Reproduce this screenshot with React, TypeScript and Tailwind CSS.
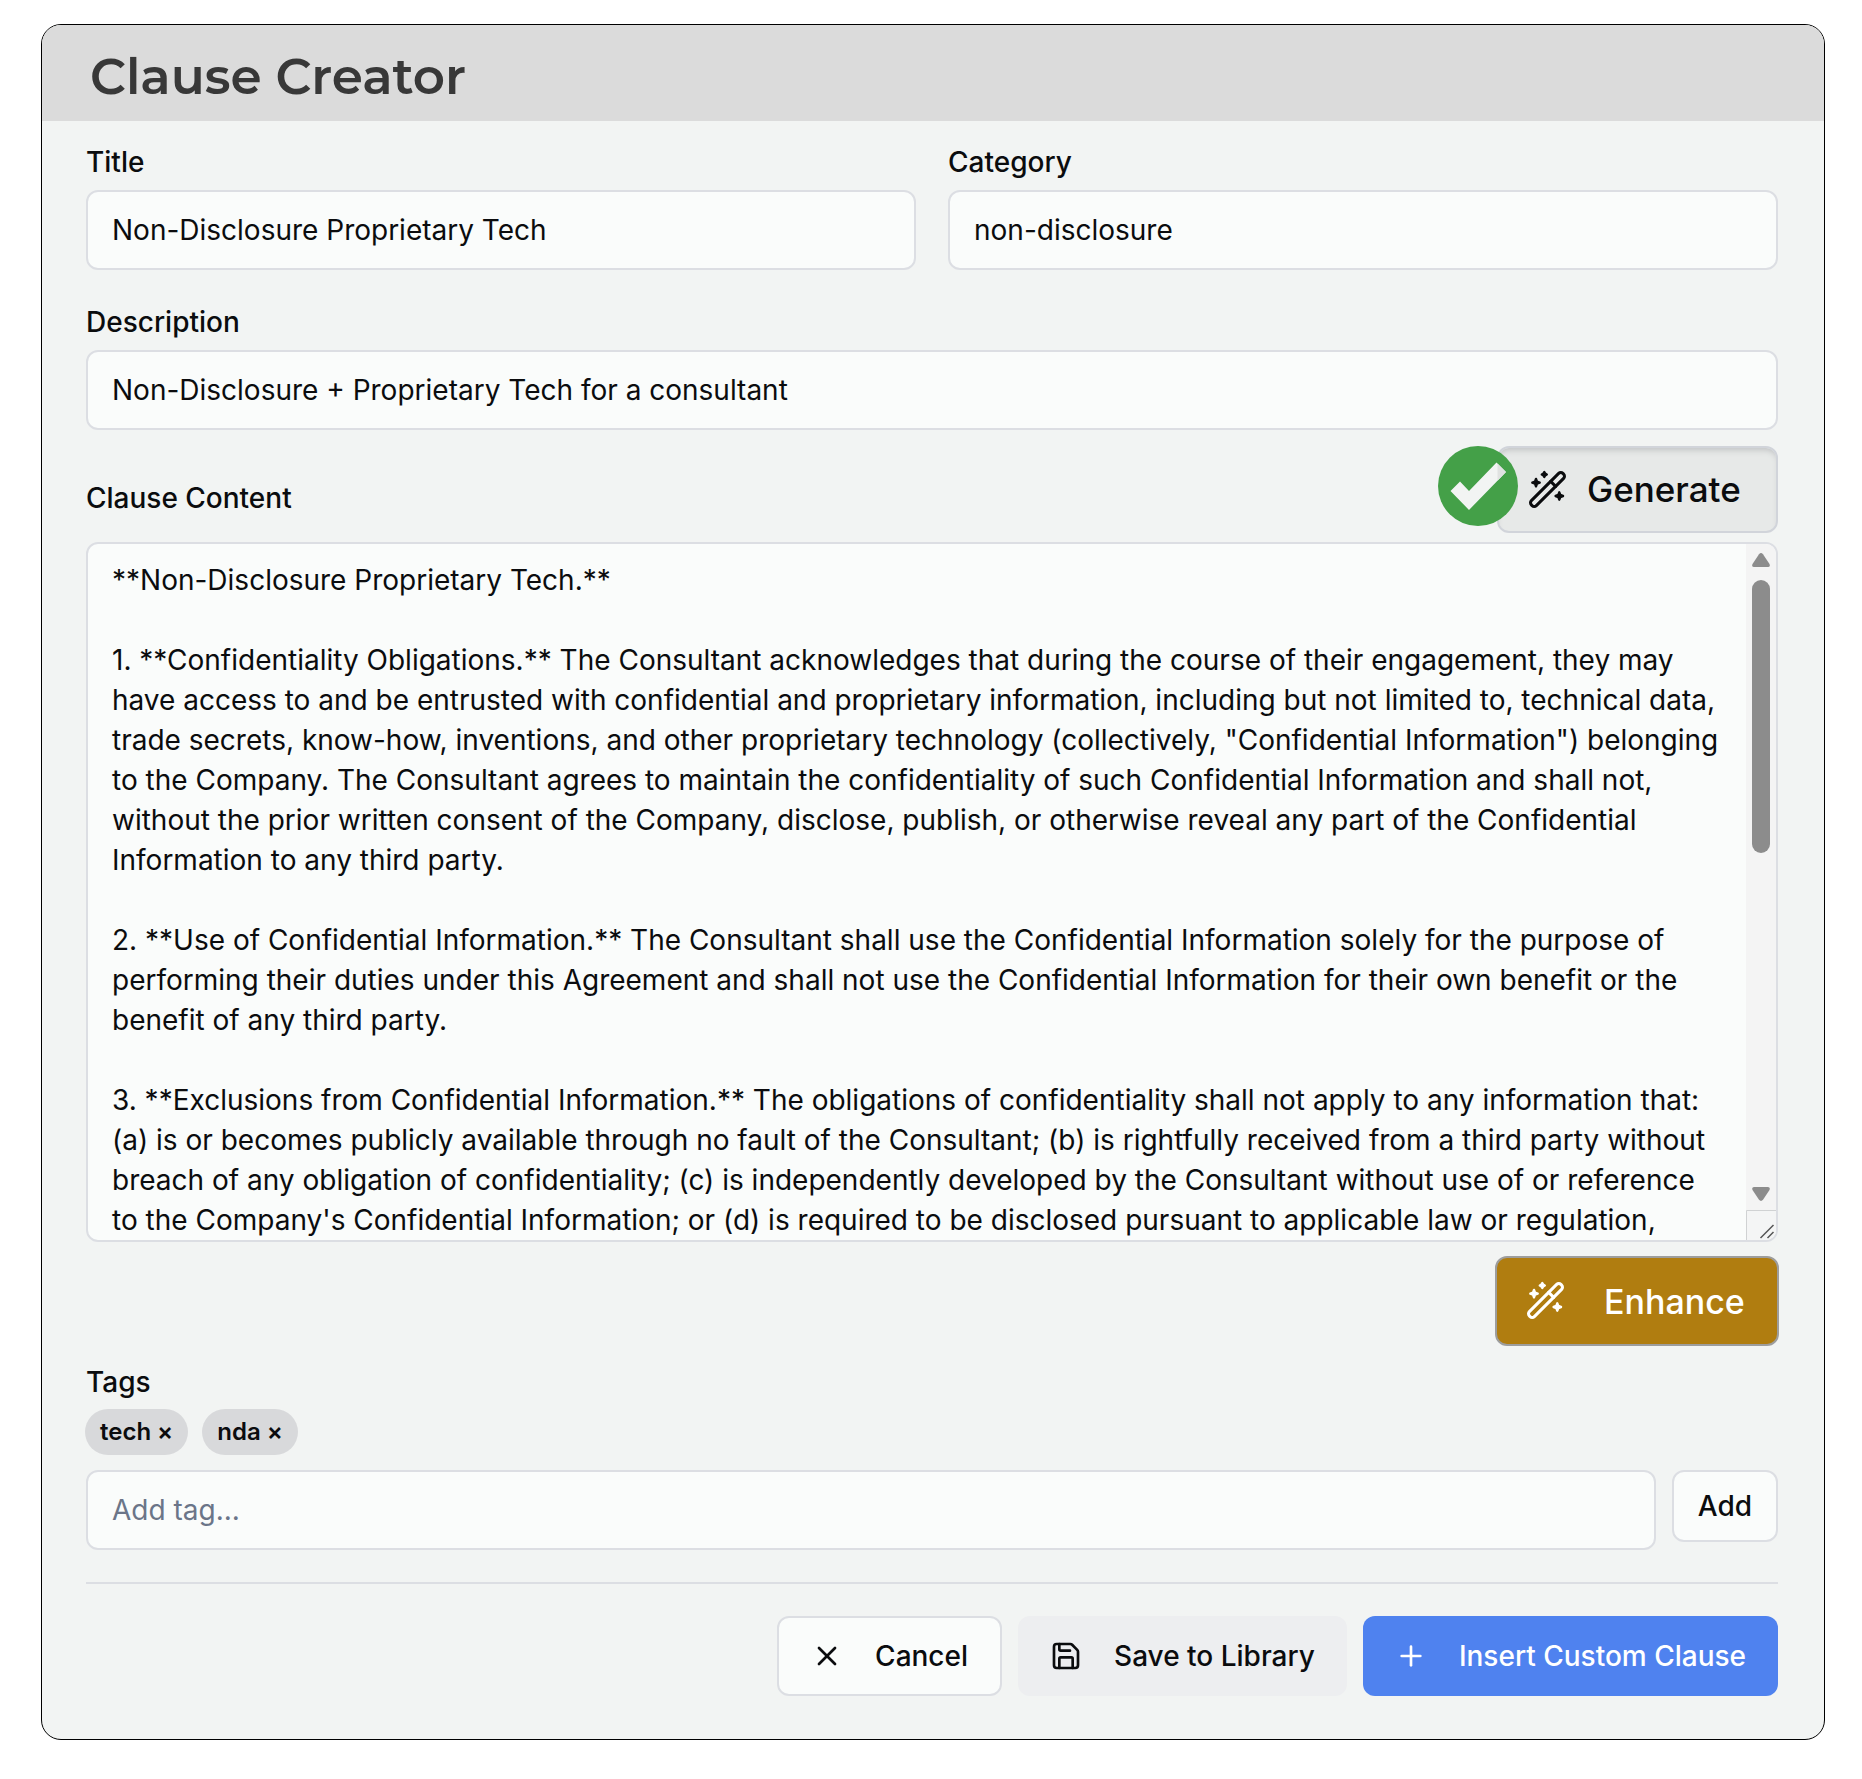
import { Plus, Save, X } from "lucide-react";
import type { ReactNode } from "react";

const clause = `**Non-Disclosure Proprietary Tech.**

1. **Confidentiality Obligations.** The Consultant acknowledges that during the course of their engagement, they may have access to and be entrusted with confidential and proprietary information, including but not limited to, technical data, trade secrets, know-how, inventions, and other proprietary technology (collectively, "Confidential Information") belonging to the Company. The Consultant agrees to maintain the confidentiality of such Confidential Information and shall not, without the prior written consent of the Company, disclose, publish, or otherwise reveal any part of the Confidential Information to any third party.

2. **Use of Confidential Information.** The Consultant shall use the Confidential Information solely for the purpose of performing their duties under this Agreement and shall not use the Confidential Information for their own benefit or the benefit of any third party.

3. **Exclusions from Confidential Information.** The obligations of confidentiality shall not apply to any information that: (a) is or becomes publicly available through no fault of the Consultant; (b) is rightfully received from a third party without breach of any obligation of confidentiality; (c) is independently developed by the Consultant without use of or reference to the Company's Confidential Information; or (d) is required to be disclosed pursuant to applicable law or regulation,`;

const field =
  "h-20 w-full min-w-0 rounded-xl border-2 border-[#dcdee3] bg-[#fafcfb] px-6 text-[28px] leading-10 placeholder:text-[#6b7588] placeholder:opacity-100 outline-none";

function Wand() {
  return (
    <svg viewBox="0 0 40 40" className="size-10 shrink-0" fill="none" stroke="currentColor" strokeWidth="3" strokeLinecap="round" strokeLinejoin="round" aria-hidden="true">
      <g transform="rotate(-45 19.5 19.5)">
        <rect x="-2.8" y="16" width="44.6" height="7" rx="3" />
        <path d="M27.5 16v7" />
      </g>
      <path fill="currentColor" strokeWidth="2.4" d="m16.3 2 .9 1.600 1.600.9-1.600.9-.9 1.600-.9-1.600-1.600-.9 1.600-.9ZM8 9l1 2.700 2.700 1-2.700 1-1 2.700-1-2.700-2.700-1 2.700-1ZM31.300 22.300l1 2.700 2.700 1-2.700 1-1 2.700-1-2.700-2.700-1 2.700-1Z" />
    </svg>
  );
}

function Field({ id, label, value }: { id: string; label: string; value: string }) {
  return (
    <div className="flex flex-col gap-2">
      <label htmlFor={id} className="text-[28px] leading-10 font-medium">{label}</label>
      <input id={id} defaultValue={value} className={field} />
    </div>
  );
}

function Tag({ children }: { children: ReactNode }) {
  return (
    <span className="flex h-[46px] items-center gap-1.5 rounded-full bg-[#d8d9db] px-[15px] text-2xl font-semibold">
      {children}
      <button type="button" aria-label="Remove tag" className="leading-8">×</button>
    </span>
  );
}

export default function App() {
  return (
    <div className="bg-white pt-6 pr-[37px] pb-10 pl-[41px] font-['Inter',sans-serif] text-[#0b0c0e] [font-optical-sizing:none]">
      <main className="overflow-hidden rounded-[20px] border border-black bg-[#f2f4f3]">
        <header className="flex h-24 items-center bg-[#dbdbdb] px-12">
          <h1 className="pt-2 font-['Montserrat','Inter',sans-serif] text-[50px] leading-none font-semibold text-[#383838]">Clause Creator</h1>
        </header>
        <form className="flex flex-col pt-[21px] pr-[46px] pb-[43px] pl-11" onSubmit={(e) => e.preventDefault()}>
          <div className="grid grid-cols-2 gap-8">
            <Field id="title" label="Title" value="Non-Disclosure Proprietary Tech" />
            <Field id="category" label="Category" value="non-disclosure" />
          </div>
          <div className="mt-8">
            <Field id="description" label="Description" value="Non-Disclosure + Proprietary Tech for a consultant" />
          </div>

          <div className="mt-4 flex items-center justify-between">
            <label htmlFor="content" className="pt-4 text-[28px] leading-10 font-medium">Clause Content</label>
            <div className="relative">
              <button type="button" className="flex h-[87px] w-[281px] items-center gap-[19px] rounded-xl border-2 border-[#d1d4da] bg-[#e7e9e8] pl-[29px] text-[35px] font-medium shadow-[inset_0_5px_6px_-3px_#bfc1c2]">
                <Wand />
                Generate
              </button>
              <svg viewBox="0 0 80 80" className="absolute top-0 -left-[59px] size-20" aria-hidden="true">
                <circle cx="40" cy="40" r="40" fill="#44a048" />
                <path d="M12.5 45 22 35.5 31 45 58.5 16.5 68 26 31 64Z" fill="#f2f4f3" />
                <path d="M59.5 17.5 68 26 59.5 34.7Z" fill="#e0e2e1" />
              </svg>
            </div>
          </div>

          <div className="mt-[9px] flex h-[700px] overflow-hidden rounded-xl border-2 border-[#dcdee3] bg-[#fafcfb]">
            <textarea id="content" defaultValue={clause} className="min-w-0 flex-1 resize-none overflow-hidden px-6 py-4 text-[28px] leading-10 outline-none" />
            <div className="flex w-[30px] flex-col items-center bg-[#f4f4f4] text-[#8c8c8c]" aria-hidden="true">
              <svg viewBox="0 0 18 14" className="mt-[9px] h-[14px] w-[18px]" fill="currentColor">
                <path d="M7 1.2q2-2.2 4 0l6.5 9.8q1 2.8-1.5 3H2q-2.500-.2-1.500-3Z" />
              </svg>
              <div className="mt-[13px] h-[273px] w-[18px] rounded-full bg-[#8c8c8c]" />
              <svg viewBox="0 0 18 14" className="mt-auto mb-[9px] h-[14px] w-[18px] rotate-180" fill="currentColor">
                <path d="M7 1.2q2-2.2 4 0l6.5 9.8q1 2.8-1.5 3H2q-2.500-.2-1.500-3Z" />
              </svg>
              <svg viewBox="0 0 30 30" className="h-[30px] w-[30px]" fill="none">
                <path d="M0 0h30v30H0z" fill="#f4f5f5" />
                <path d="M.5 30V.5H30" stroke="#d0d2d3" />
                <path d="m14.500 28 13-13M21.500 28l6-6" stroke="#555" strokeWidth="1.500" />
              </svg>
            </div>
          </div>

          <button type="button" className="mt-[14px] -mr-px flex h-[90px] w-[284px] items-center gap-[38px] self-end rounded-xl border-2 border-[#9d9d9d] bg-[#b07d10] pl-[29px] text-[34px] font-medium text-white">
            <Wand />
            Enhance
          </button>

          <label htmlFor="tag" className="mt-4 text-[28px] leading-10 font-medium">Tags</label>
          <div className="mt-[7px] -ml-px flex gap-[14px]">
            <Tag>tech</Tag>
            <Tag>nda</Tag>
          </div>
          <div className="mt-[15px] flex items-start gap-4">
            <input id="tag" placeholder="Add tag..." className={field} />
            <button type="button" className="h-[72px] shrink-0 rounded-xl border-2 border-[#dcdee3] bg-[#fafcfb] px-6 text-[28px] font-medium">Add</button>
          </div>

          <div className="mt-8 flex justify-end gap-4 border-t-2 border-[#dcdee3] pt-8 text-[28px] font-medium">
            <button type="button" className="flex h-20 items-center gap-8 rounded-xl border-2 border-[#dcdee3] bg-[#fafcfb] px-8">
              <X className="size-8" />
              Cancel
            </button>
            <button type="button" className="flex h-20 items-center gap-8 rounded-xl bg-[#edeef0] px-8">
              <Save className="size-8" />
              Save to Library
            </button>
            <button type="submit" className="flex h-20 items-center gap-8 rounded-xl bg-[#4f82ef] px-8 text-white">
              <Plus className="size-8" />
              Insert Custom Clause
            </button>
          </div>
        </form>
      </main>
    </div>
  );
}
